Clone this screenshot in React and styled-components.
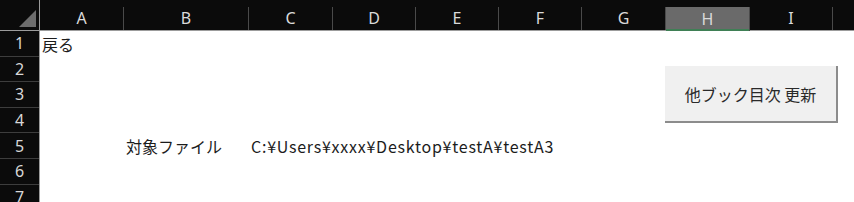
import styled, { createGlobalStyle } from "styled-components";

const GlobalStyle = createGlobalStyle`
  html, body {
    margin: 0;
    padding: 0;
    background: #ffffff;
    overflow: hidden;
  }
`;

const COLS = [
  { name: "A", width: 84 },
  { name: "B", width: 125 },
  { name: "C", width: 84 },
  { name: "D", width: 83 },
  { name: "E", width: 83 },
  { name: "F", width: 83 },
  { name: "G", width: 84 },
  { name: "H", width: 84, selected: true },
  { name: "I", width: 83 },
  { name: "J", width: 83 },
];

const TEMPLATE = COLS.map((c) => `${c.width}px`).join(" ");

const CELLS = {
  "1-A": { text: "戻る" },
  "5-B": { text: "対象ファイル" },
  "5-C": { text: "C:¥Users¥xxxx¥Desktop¥testA¥testA3", latin: true },
};

const ROWS = [1, 2, 3, 4, 5, 6, 7];

export default function App() {
  return (
    <>
      <GlobalStyle />
      <Sheet>
        <HeaderBar>
          <Corner>
            <CornerTriangle />
          </Corner>
          <ColumnHeaders>
            {COLS.map((c) => (
              <ColumnHeader key={c.name} $selected={c.selected}>
                {c.name}
              </ColumnHeader>
            ))}
          </ColumnHeaders>
        </HeaderBar>
        <Body>
          <RowHeaders>
            {ROWS.map((r) => (
              <RowHeader key={r}>{r}</RowHeader>
            ))}
          </RowHeaders>
          <Cells>
            {ROWS.map((r) => (
              <Row key={r}>
                {COLS.map((c) => {
                  const cell = CELLS[`${r}-${c.name}`];
                  return (
                    <Cell key={c.name} $latin={cell?.latin}>
                      {cell?.text}
                    </Cell>
                  );
                })}
              </Row>
            ))}
            <MacroButton>他ブック目次 更新</MacroButton>
          </Cells>
        </Body>
      </Sheet>
    </>
  );
}

const Sheet = styled.div`
  width: 854px;
  height: 202px;
  overflow: hidden;
  display: flex;
  flex-direction: column;
  font-family: "Noto Sans CJK JP", "Noto Sans", sans-serif;
`;

const HeaderBar = styled.div`
  display: flex;
  height: 32px;
  background: #0b0b0b;
  border-bottom: 1px solid #9c9c9c;
  box-sizing: border-box;
`;

const Corner = styled.div`
  width: 40px;
  flex: none;
  position: relative;
  border-right: 1px solid #9c9c9c;
  box-sizing: border-box;
`;

const CornerTriangle = styled.div`
  position: absolute;
  right: 3px;
  bottom: 3px;
  width: 0;
  height: 0;
  border-left: 17px solid transparent;
  border-bottom: 17px solid #6d6d6d;
`;

const ColumnHeaders = styled.div`
  display: grid;
  grid-template-columns: ${TEMPLATE};
  padding-top: 7px;
`;

const ColumnHeader = styled.div`
  display: flex;
  align-items: center;
  justify-content: center;
  border-right: 1px solid #4a4a4a;
  box-sizing: border-box;
  font-family: "Noto Sans", "Liberation Sans", sans-serif;
  font-size: 16px;
  padding-bottom: 1px;
  color: #dadada;
  background: ${(p) => (p.$selected ? "#6a6a6a" : "transparent")};
  box-shadow: ${(p) => (p.$selected ? "inset 0 -2px 0 #3f7f55" : "none")};
  margin-bottom: ${(p) => (p.$selected ? "-1px" : "0")};
`;

const Body = styled.div`
  display: flex;
  flex: 1;
`;

const RowHeaders = styled.div`
  width: 40px;
  flex: none;
  background: #0b0b0b;
  border-right: 1px solid #9c9c9c;
  box-sizing: border-box;
  display: flex;
  flex-direction: column;
`;

const RowHeader = styled.div`
  height: 25.6px;
  flex: none;
  box-sizing: border-box;
  border-bottom: 1px solid #3d3d3d;
  display: flex;
  align-items: center;
  justify-content: center;
  font-family: "Noto Sans", "Liberation Sans", sans-serif;
  font-size: 16px;
  color: #d8d8d8;
`;

const Cells = styled.div`
  position: relative;
  flex: 1;
  background: #ffffff;
  display: flex;
  flex-direction: column;
`;

const Row = styled.div`
  display: grid;
  grid-template-columns: ${TEMPLATE};
  height: 25.6px;
  flex: none;
`;

const Cell = styled.div`
  display: flex;
  align-items: center;
  padding-left: 2px;
  white-space: nowrap;
  overflow: visible;
  font-size: 16px;
  letter-spacing: ${(p) => (p.$latin ? "0.75px" : "0")};
  color: #1c1c1c;
`;

const MacroButton = styled.button`
  position: absolute;
  left: 625px;
  top: 35px;
  width: 173px;
  height: 57px;
  box-sizing: border-box;
  background: #f0f0f0;
  border: none;
  border-right: 2px solid #8c8c8c;
  border-bottom: 2px solid #8c8c8c;
  font-family: "Noto Sans CJK JP", sans-serif;
  font-size: 16px;
  color: #2a2a2a;
  padding: 0;
  display: flex;
  align-items: center;
  justify-content: center;
`;
